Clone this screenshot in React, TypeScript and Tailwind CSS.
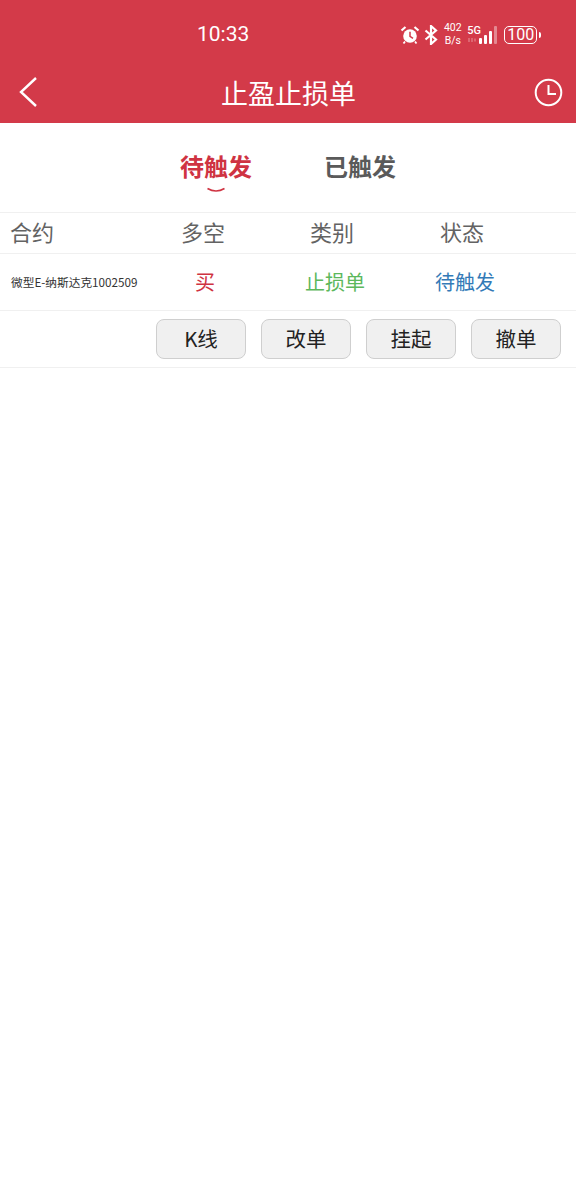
import React from "react";

const font = "font-['Noto_Sans_CJK_SC','Noto_Sans',sans-serif]";

const StatusIcons = () => (
  <div className="flex items-center ml-[151px] text-white">
    {/* alarm */}
    <svg width="20" height="20" viewBox="0 0 20 20" className="mr-[4px]">
      <circle cx="10" cy="11" r="6.8" fill="#fff" />
      <path d="M10 6.8V11.4L13 13.4" stroke="#d33a49" strokeWidth="1.5" fill="none" />
      <path d="M1.5 5.5L5.5 2M18.5 5.5L14.5 2" stroke="#fff" strokeWidth="2.2" fill="none" />
      <path d="M5 16.5L3.5 18.5M15 16.5L16.5 18.5" stroke="#fff" strokeWidth="1.8" fill="none" />
    </svg>
    {/* bluetooth */}
    <svg width="14" height="20" viewBox="0 0 14 20" className="mr-[5px]">
      <path d="M1.5 5.5L12 14.5L7 19V1L12 5.5L1.5 14.5" stroke="#fff" strokeWidth="2.2" fill="none" />
    </svg>
    <div className="w-[19px] mr-[5px] text-[10.5px] leading-[12.5px] text-center font-['Roboto',sans-serif]">
      <div>402</div>
      <div>B/s</div>
    </div>
    <div className="relative w-[32px] h-[20px] mr-[5px]">
      <span className="absolute left-0 top-[1px] text-[11px] leading-[10px] font-medium font-['Roboto',sans-serif]">5G</span>
      <svg width="32" height="20" viewBox="0 0 32 20" className="absolute left-0 top-0">
        <path d="M2 13v4M5 13v4M8 13.5v3" stroke="#fff" strokeOpacity="0.45" strokeWidth="1" />
        <rect x="12" y="13" width="3" height="6" rx="1" fill="#fff" />
        <rect x="17" y="10" width="3" height="9" rx="1" fill="#fff" />
        <rect x="22" y="6" width="3" height="13" rx="1" fill="#fff" />
        <rect x="27" y="1" width="3" height="18" rx="1" fill="#fff" fillOpacity="0.4" />
      </svg>
    </div>
    <div className="w-[33px] h-[18px] border-[1.5px] border-white rounded-[5px] flex items-center justify-center text-[16px] leading-none font-['Roboto',sans-serif]">
      100
    </div>
    <div className="w-[2px] h-[6px] ml-[2px] bg-white rounded-r-sm" />
  </div>
);

const Header = () => (
  <div className="bg-[#d33a49] h-[123px] flex flex-col">
    <div className="h-[62px] flex items-center pl-[197px] pt-[7px]">
      <span className="text-[21px] leading-none text-white font-['Roboto',sans-serif]">10:33</span>
      <StatusIcons />
    </div>
    <div className="flex-1 flex items-center justify-between pl-[19px] pr-[13px] pb-[1px]">
      <svg width="18" height="30" viewBox="0 0 18 30">
        <path d="M17 1L2 15L17 29" stroke="#fff" strokeWidth="2.4" fill="none" />
      </svg>
      <h1 className="text-[27px] leading-none text-white translate-x-[3px]">止盈止损单</h1>
      <svg width="29" height="29" viewBox="0 0 29 29">
        <circle cx="14.5" cy="14.5" r="12.8" stroke="#fff" strokeWidth="2" fill="none" />
        <path d="M14.5 7V16H22" stroke="#fff" strokeWidth="2" fill="none" />
      </svg>
    </div>
  </div>
);

const Tabs = () => (
  <div className="h-[90px] flex justify-center gap-[72px] pt-[26px] text-[24px] leading-[34px] font-bold border-b border-[#f0f0f0]">
    <div className="relative text-[#cf3342]">
      待触发
      <svg width="20" height="8" viewBox="0 0 20 8" className="absolute left-[26px] top-[38px]">
        <path d="M1.5 1.5Q10 6.5 18.5 1.5" stroke="#cf3342" strokeWidth="1.6" fill="none" />
      </svg>
    </div>
    <div className="text-[#5a5a5a]">已触发</div>
  </div>
);

const Row = ({ className, children }: { className: string; children: React.ReactNode }) => (
  <div className={`grid grid-cols-[140px_130px_130px_130px] items-center border-b border-[#f0f0f0] ${className}`}>
    {children}
  </div>
);

const Action = ({ label }: { label: string }) => (
  <button className="w-[90px] h-[40px] pb-[2px] rounded-[8px] border border-[#cfcfcf] bg-[#f0f0f0] text-[20.5px] leading-none text-[#222222]">
    {label}
  </button>
);

export default function App() {
  return (
    <div className={`w-[576px] h-[1188px] bg-white overflow-hidden ${font}`}>
      <Header />
      <Tabs />

      <Row className="h-[41px] pb-[3px] text-[22px] text-[#636363]">
        <div className="pl-[10px]">合约</div>
        <div className="text-center pr-[4px]">多空</div>
        <div className="text-center pr-[6px]">类别</div>
        <div className="text-center pr-[6px]">状态</div>
      </Row>

      <Row className="h-[57px] text-[20px]">
        <div className="pl-[11px] text-[11.7px] text-[#333333] whitespace-nowrap">微型E-纳斯达克1002509</div>
        <div className="text-center text-[#cf3342]">买</div>
        <div className="text-center text-[#5cb85c]">止损单</div>
        <div className="text-center text-[#337ab7]">待触发</div>
      </Row>

      <div className="h-[57px] flex items-center justify-end gap-[15px] pr-[15px] border-b border-[#f0f0f0]">
        <Action label="K线" />
        <Action label="改单" />
        <Action label="挂起" />
        <Action label="撤单" />
      </div>
    </div>
  );
}
